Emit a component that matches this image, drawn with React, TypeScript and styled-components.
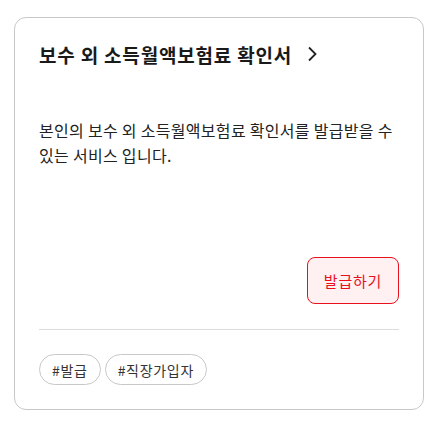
import React, { FC } from "react";
import styled, { createGlobalStyle } from "styled-components";

const GlobalStyle = createGlobalStyle`
  body {
    margin: 0;
    background: #fff;
    font-family: "Noto Sans CJK KR", "Noto Sans", sans-serif;
  }
`;

const tags = ["#발급", "#직장가입자"];

const App: FC = () => {
  return (
    <Page>
      <GlobalStyle />
      <Card>
        <TitleRow>
          <Title>보수 외 소득월액보험료 확인서</Title>
          <svg width="10" height="16" viewBox="0 0 10 16" fill="none">
            <path d="M2 1.5 L8.5 8 L2 14.5" stroke="#222" strokeWidth="1.8" />
          </svg>
        </TitleRow>
        <Desc>본인의 보수 외 소득월액보험료 확인서를 발급받을 수 있는 서비스 입니다.</Desc>
        <Actions>
          <IssueButton>발급하기</IssueButton>
        </Actions>
        <Divider />
        <Tags>
          {tags.map((t) => (
            <Tag key={t}>{t}</Tag>
          ))}
        </Tags>
      </Card>
    </Page>
  );
};

const Page = styled.div`
  padding: 17px 14px;
`;

const Card = styled.div`
  box-sizing: border-box;
  width: 410px;
  height: 393px;
  border: 1px solid #c8c8c8;
  border-radius: 12px;
  padding: 22px 24px 24px;
  display: flex;
  flex-direction: column;
`;

const TitleRow = styled.div`
  display: flex;
  align-items: center;
  gap: 15px;
  height: 28px;
`;

const Title = styled.h2`
  margin: 0;
  font-size: 19px;
  font-weight: 700;
  color: #1a1a1a;
  letter-spacing: 0.8px;
`;

const Desc = styled.p`
  margin: 50px 0 0;
  font-size: 16px;
  line-height: 25px;
  color: #222;
  letter-spacing: 0.3px;
`;

const Actions = styled.div`
  margin-top: auto;
  display: flex;
  justify-content: flex-end;
`;

const IssueButton = styled.button`
  box-sizing: border-box;
  width: 92px;
  height: 47px;
  border: 1px solid #e8101e;
  border-radius: 8px;
  background: #fff0f1;
  color: #e8101e;
  font-family: inherit;
  font-size: 15px;
  letter-spacing: 0.8px;
  cursor: pointer;
`;

const Divider = styled.hr`
  margin: 25px 0 0;
  border: 0;
  border-top: 1px solid #dcdcdc;
`;

const Tags = styled.div`
  display: flex;
  gap: 4px;
  margin-top: 24px;
`;

const Tag = styled.span`
  box-sizing: border-box;
  height: 31px;
  padding: 0 12px;
  display: inline-flex;
  align-items: center;
  border: 1px solid #c8c8c8;
  border-radius: 16px;
  font-size: 14px;
  letter-spacing: 0.7px;
  color: #333;
`;

export default App;
